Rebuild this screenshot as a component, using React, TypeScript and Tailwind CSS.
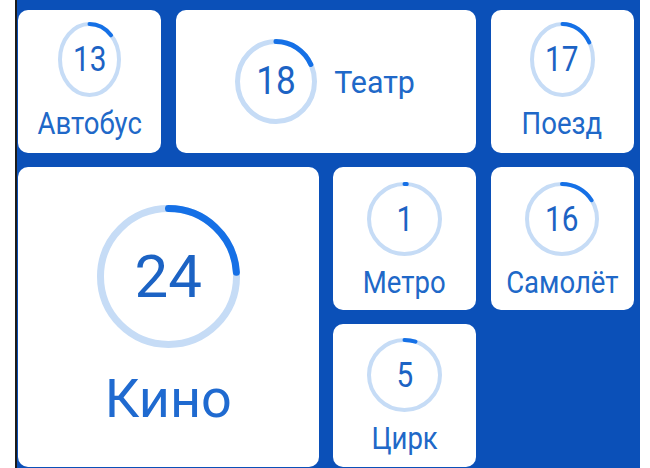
import React from "react";

const FONT = { fontFamily: "Roboto, 'Noto Sans', sans-serif" };

type RingProps = { value: number; w: number; h: number; sw: number };

function Ring({ value, w, h, sw }: RingProps) {
  const cx = w / 2;
  const cy = h / 2;
  const rx = (w - sw) / 2;
  const ry = (h - sw) / 2;
  const a = (Math.min(value, 99.9) / 100) * Math.PI * 2;
  const x = cx + rx * Math.sin(a);
  const y = cy - ry * Math.cos(a);
  const large = a > Math.PI ? 1 : 0;
  const d = `M ${cx} ${cy - ry} A ${rx} ${ry} 0 ${large} 1 ${x.toFixed(2)} ${y.toFixed(2)}`;
  return (
    <svg width={w} height={h} viewBox={`0 0 ${w} ${h}`} className="absolute inset-0">
      <ellipse cx={cx} cy={cy} rx={rx} ry={ry} fill="none" stroke="#c6dcf6" strokeWidth={sw} />
      <path d={d} fill="none" stroke="#1570e6" strokeWidth={sw} strokeLinecap="round" />
    </svg>
  );
}

function Dial({
  value,
  w,
  h,
  sw,
  numClass,
}: RingProps & { numClass: string }) {
  return (
    <div className="relative flex shrink-0 items-center justify-center" style={{ width: w, height: h }}>
      <Ring value={value} w={w} h={h} sw={sw} />
      <span className={`relative inline-block leading-none text-[#1c63c4] ${numClass}`}>{value}</span>
    </div>
  );
}

function SmallCard({
  value,
  label,
  w,
  h,
  pt,
}: {
  value: number;
  label: string;
  w: number;
  h: number;
  pt: string;
}) {
  return (
    <div className={`flex flex-col items-center rounded-[10px] bg-white ${pt}`}>
      <Dial value={value} w={w} h={h} sw={4} numClass="text-[35px] scale-x-[0.85]" />
      <span className="mt-[10px] inline-block scale-x-[0.86] text-[32px] leading-none text-[#2068c8]">
        {label}
      </span>
    </div>
  );
}

export default function App() {
  return (
    <div className="flex h-[468px] w-[650px] overflow-hidden bg-white" style={FONT}>
      <div className="w-[15px] shrink-0 bg-white" />
      <div className="w-[2px] shrink-0 bg-[#1b1b1b]" />
      <div className="w-[623px] shrink-0 bg-[#0b50b8] pl-[1px] pt-[10px]">
        <div className="grid grid-cols-[143px_143px_143px_143px] grid-rows-[143px_143px_143px] gap-x-[14.5px] gap-y-[14px]">
          <SmallCard value={13} label="Автобус" w={63} h={75} pt="pt-[12px]" />

          <div className="col-span-2 flex items-center justify-center gap-[15px] rounded-[10px] bg-white">
            <Dial value={18} w={82} h={85} sw={5} numClass="text-[39px] scale-x-[0.9]" />
            <span className="inline-block scale-x-[0.95] text-[32px] leading-none text-[#2068c8]">Театр</span>
          </div>

          <SmallCard value={17} label="Поезд" w={65} h={75} pt="pt-[12px]" />

          <div className="col-span-2 row-span-2 flex flex-col items-center rounded-[10px] bg-white pt-[38px]">
            <Dial value={24} w={143} h={143} sw={7} numClass="text-[60px]" />
            <span className="mt-[24px] inline-block text-[54px] leading-none text-[#1f6ad0]">Кино</span>
          </div>

          <SmallCard value={1} label="Метро" w={75} h={74} pt="pt-[15px]" />
          <SmallCard value={16} label="Самолёт" w={74} h={74} pt="pt-[15px]" />
          <SmallCard value={5} label="Цирк" w={75} h={74} pt="pt-[14px]" />
        </div>
      </div>
      <div className="flex-1 bg-white" />
    </div>
  );
}
